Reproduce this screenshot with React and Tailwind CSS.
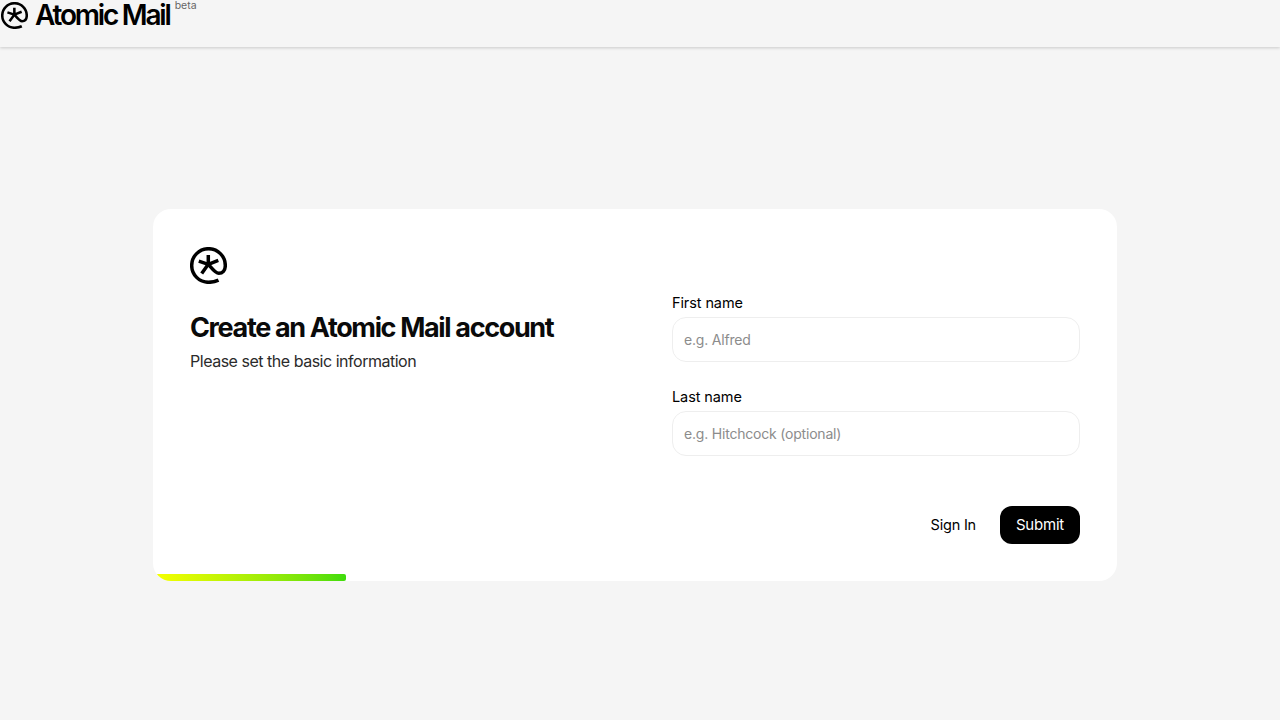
const Logo = ({ className }) => (
  <svg className={className} viewBox="0 0 37 37" fill="none" stroke="currentColor" strokeWidth="3.5">
    <path d="M28.5 33.2C25.6 34.6 22.2 35.3 18.5 35.3C9.2 35.3 1.7 27.8 1.7 18.5C1.7 9.2 9.2 1.7 18.5 1.7C27.8 1.7 35.3 9.2 35.3 18.5C35.3 23.5 32.5 26.3 28.8 26.3C25.4 26.3 22 21.5 18.3 17.3" />
    <path d="M18.3 8V17.3L11.7 26.5M18.3 17.3L8.8 14.2M18.3 17.3L28.3 13.4" />
  </svg>
);

const Field = ({ label, placeholder }) => (
  <div className="flex flex-col">
    <label className="text-[14.5px] leading-[22px] tracking-[-0.1px] text-black mb-[3px]">{label}</label>
    <input
      placeholder={placeholder}
      className="h-[45px] w-full rounded-[14px] border border-[#eeeeee] bg-white px-[11px] text-[14px] tracking-[-0.2px] text-black outline-none placeholder:text-[#8c8c8c]"
    />
  </div>
);

export default function App() {
  return (
    <div className="min-h-[720px] flex flex-col bg-[#f5f5f5] font-['Inter',sans-serif]">
      {/* Top bar */}
      <header className="h-[47px] flex items-start bg-[#f5f5f5] shadow-[0_1px_3px_rgba(0,0,0,0.18)]">
        <Logo className="w-[27px] h-[27px] mt-[2px] ml-[1px] text-black" />
        <span className="ml-[7px] mt-[-2px] text-[28px] leading-[35px] font-semibold tracking-[-2.2px] text-black">Atomic Mail</span>
        <span className="ml-[5px] mt-[-1px] text-[10.5px] leading-[14px] text-[#666666]">beta</span>
      </header>

      <main className="flex-1 flex justify-center pt-[162px] pr-[10px]">
        {/* Card */}
        <div className="relative w-[964px] h-[372px] rounded-[18px] bg-white overflow-hidden pl-[37px] pr-[37px] pt-[38px] grid grid-cols-[482px_408px]">
          <div>
            <Logo className="w-[37px] h-[37px] text-black" />
            <h1 className="mt-[26px] text-[27px] leading-[36px] font-bold tracking-[-1.35px] text-[#0a0a0a]">Create an Atomic Mail account</h1>
            <p className="mt-[3px] text-[16px] leading-[24px] tracking-[-0.48px] text-[#2b2b2b]">Please set the basic information</p>
          </div>

          <div className="pt-[45px]">
            <div className="flex flex-col gap-[24px]">
              <Field label="First name" placeholder="e.g. Alfred" />
              <Field label="Last name" placeholder="e.g. Hitchcock (optional)" />
            </div>
            <div className="mt-[50px] flex items-center justify-end gap-[24px]">
              <button className="text-[14.5px] tracking-[-0.2px] text-black">Sign In</button>
              <button className="h-[38px] w-[80px] rounded-[12px] bg-black text-[15px] tracking-[-0.2px] text-white">Submit</button>
            </div>
          </div>

          {/* Progress */}
          <div className="absolute left-[4px] bottom-0 h-[7px] w-[189px] rounded-r-[4px] rounded-bl-[14px] bg-gradient-to-r from-[#f4ff00] to-[#3ddc0c]" />
        </div>
      </main>
    </div>
  );
}
